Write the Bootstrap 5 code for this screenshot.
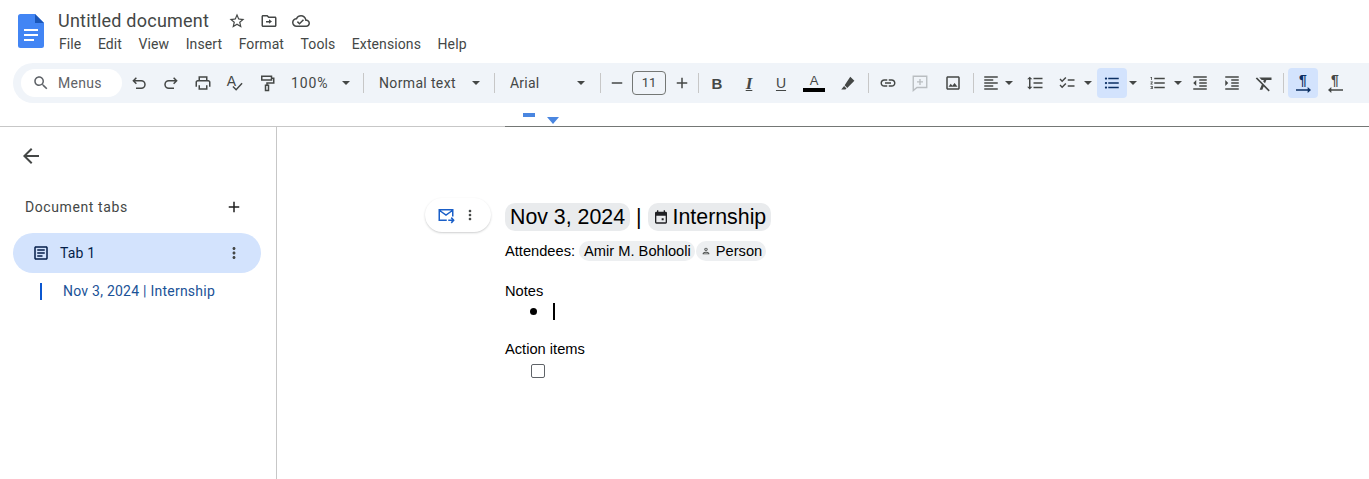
<!DOCTYPE html>
<html lang="en">
<head>
  <meta charset="UTF-8" />
  <title>Untitled document - Google Docs</title>
  <link href="https://cdn.jsdelivr.net/npm/bootstrap@5.3.0/dist/css/bootstrap.min.css" rel="stylesheet" />
  <style>
    body { font-family: Roboto, "Open Sans", sans-serif; color: #444746; overflow: hidden; background: #fff; }
    svg { fill: currentColor; display: block; flex: none; }

    .top-head { height: 63px; padding-left: 18px; }
    .doc-logo { width: 26px; height: 34px; margin-top: 14px; margin-right: 14px; }
    .doc-title { font-size: 18px; line-height: 24px; letter-spacing: .23px; padding-top: 9px; width: 170px; }
    .head-icon { width: 18px; height: 18px; margin-right: 14px; }
    .head-icons { padding-top: 12px; }
    .menu-row { margin-top: 1px; margin-left: 1px; font-size: 14px; line-height: 20px; letter-spacing: .1px; gap: 16.5px; }

    .tool-bar { height: 40px; margin-left: 13px; padding-left: 8px; background: #f0f4f9; border-radius: 20px 0 0 20px; font-size: 14px; white-space: nowrap; }
    .find-pill { width: 101px; height: 28px; background: #fff; border-radius: 14px; padding-left: 11px; gap: 8px; font-size: 14px; letter-spacing: .3px; color: #5f6368; margin-right: 1px; }
    .tb { width: 32px; height: 30px; flex: none; }
    .tb svg { width: 18px; height: 18px; }
    .tb .clear-ic { width: 21px; height: 21px; }
    .tb-narrow { width: 31px; }
    .tb-wide { width: 30px; border-radius: 4px; }
    .tb-align { width: 28px; }
    .tb-on { background: #d3e3fd; color: #0b2f63; }
    .tb-off { color: #b9bdc1; }
    .caret-ic { width: 8px !important; height: 4px !important; flex: none; }
    .sel { height: 30px; flex: none; padding: 0 7px 0 8px; justify-content: space-between; }
    .sel-zoom { width: 72px; padding-right: 5px; letter-spacing: .9px; }
    .sel-style { width: 115px; padding-left: 7px; letter-spacing: .35px; }
    .sel-font { width: 90px; letter-spacing: .2px; }
    .sep { width: 1px; height: 20px; background: #c7c7c7; flex: none; }
    .sep-a { margin: 0 8px; }
    .sep-b { margin: 0 7px; }
    .sep-d { margin: 0 2px 0 1px; }
    .sep-e { margin: 0 3px 0 4px; }
    .sep-f { margin: 0 4px 0 3px; }
    .gap-r1 { margin-right: 1px; }
    .gap-r2 { margin-right: 2px; }
    .gap-r5 { margin-right: 5px; }
    .gap-r6 { margin-right: 6px; }
    .size-box { width: 34px; height: 24px; border: 1px solid #747775; border-radius: 4px; flex: none; font-size: 13px; color: #444746; }
    .fmt { font-family: "Liberation Sans", sans-serif; font-size: 15px; line-height: 1; color: #444746; }
    .fmt-i { font-family: "Liberation Serif", serif; font-size: 17px; text-decoration: underline; text-underline-offset: 1px; }
    .fmt-u { text-decoration: underline; text-underline-offset: 2px; font-size: 14px; }
    .fmt-a { font-size: 13px; }
    .color-bar { width: 22px; height: 4px; background: #000; margin-top: 1px; }
    .spell-a { font-size: 14px; line-height: 14px; margin-right: -4px; margin-top: -5px; }
    .spell-check { width: 11px !important; height: 11px !important; margin-top: 7px; }
    .para { font-family: "Liberation Sans", sans-serif; font-weight: 700; font-size: 14px; line-height: 12px; }
    .para-arrow { width: 15px !important; height: 6px !important; margin-top: 1px; }

    .ruler-strip { height: 24px; border-bottom: 1px solid #c7c7c7; }
    .ruler-line { position: absolute; left: 505px; right: 0; bottom: -1px; height: 1px; background: #747775; }
    .ruler-bar { position: absolute; left: 523px; top: 10px; width: 12px; height: 4px; background: #4a86e0; }
    .ruler-tri { position: absolute; left: 547px; top: 14px; width: 12px; height: 7px; fill: #4a86e0; }

    .side-pane { width: 277px; flex: none; border-right: 1px solid #c7c7c7; padding: 17px 15px 0 13px; }
    .back-ic { width: 24px; height: 24px; margin-left: 6px; }
    .tabs-head { margin-top: 27px; margin-left: 12px; height: 24px; font-size: 14px; letter-spacing: .6px; margin-right: 18px; }
    .tabs-head svg { width: 18px; height: 18px; color: #1f1f1f; }
    .tab-pill { margin-top: 14px; height: 40px; background: #d3e3fd; border-radius: 20px; padding: 0 18px 0 19px; color: #041e49; font-size: 14px; letter-spacing: .2px; }
    .tab-pill .art-ic { width: 18px; height: 18px; margin-right: 10px; }
    .tab-pill .dot-ic { width: 18px; height: 18px; color: #444746; }
    .tab-sub { margin-top: 9px; margin-left: 27px; height: 18px; font-size: 14px; color: #1a5297; letter-spacing: .24px; line-height: 18px; }
    .tab-sub-bar { width: 2px; height: 17px; background: #0b57d0; margin-right: 21px; }

    .doc-area { padding: 71px 0 0 148px; gap: 14px; font-family: "Liberation Sans", sans-serif; color: #000; }
    .mail-pill { width: 66px; height: 34px; background: #fff; border-radius: 17px; box-shadow: 0 1px 2px rgba(60,64,67,.25); padding-left: 12px; gap: 7px; flex: none; }
    .mail-pill svg { width: 18px; height: 18px; color: #1a5fc8; }
    .mail-pill .dot-ic { width: 16px; height: 16px; color: #444746; }
    .doc-body { font-size: 14.67px; line-height: 20px; }
    .doc-head { font-size: 21.33px; line-height: 28px; height: 28px; margin-top: 5px; }
    .chip { background: #e9ebed; border-radius: 10px; padding: 0 5px; }
    .chip-cal svg { width: 16px; height: 16px; margin-right: 4px; color: #202124; }
    .sep-bar { margin: 0 6px 0 6px; }
    .attend-row { margin-top: 10px; height: 20px; }
    .chip-sm { background: #edeff1; border-radius: 10px; padding: 0 4px 0 5px; margin-left: 4px; }
    .chip-person { margin-left: 1px; padding-left: 5px; padding-right: 4px; }
    .chip-person svg { width: 10px; height: 10px; margin-right: 5px; color: #444746; }
    .notes-line { margin-top: 20px; }
    .bullet-row { height: 20px; margin-left: 25px; }
    .bullet-dot { width: 7px; height: 7px; background: #000; border-radius: 50%; margin-right: 16px; }
    .text-cursor { width: 2px; height: 17px; background: #000; }
    .action-line { margin-top: 18px; }
    .todo-box { width: 14px; height: 14px; border: 1.5px solid #5f6368; border-radius: 2px; margin: 5px 0 0 26px; }
  </style>
</head>
<body class="d-flex flex-column vh-100">

  <svg width="0" height="0" class="position-absolute">
    <defs>
      <symbol id="i-star" viewBox="0 0 24 24"><path d="M22 9.24l-7.19-.62L12 2 9.19 8.63 2 9.24l5.46 4.73L5.82 21 12 17.27 18.18 21l-1.63-7.03L22 9.24zM12 15.4l-3.76 2.27 1-4.28-3.32-2.88 4.38-.38L12 6.1l1.71 4.04 4.38.38-3.32 2.88 1 4.28L12 15.4z"/></symbol>
      <symbol id="i-move" viewBox="0 0 24 24"><path d="M20 6h-8l-2-2H4c-1.1 0-2 .9-2 2v12c0 1.1.9 2 2 2h16c1.1 0 2-.9 2-2V8c0-1.1-.9-2-2-2zm0 12H4V6h5.17l2 2H20v10zm-8-2.5V14H8v-2h4V9.5l4 3z"/></symbol>
      <symbol id="i-cloud" viewBox="0 0 24 24"><path d="M19.35 10.04C18.67 6.59 15.64 4 12 4 9.11 4 6.6 5.64 5.35 8.04 2.34 8.36 0 10.91 0 14c0 3.31 2.69 6 6 6h13c2.76 0 5-2.24 5-5 0-2.64-2.05-4.78-4.65-4.96zM19 18H6c-2.21 0-4-1.79-4-4 0-2.05 1.53-3.76 3.56-3.97l1.07-.11.5-.95C8.08 7.14 9.94 6 12 6c2.62 0 4.88 1.86 5.39 4.43l.3 1.5 1.53.11c1.56.1 2.78 1.41 2.78 2.96 0 1.65-1.35 3-3 3zm-9-1l6.01-6.01-1.41-1.41L10 14.17l-2.09-2.09L6.5 13.5z"/></symbol>
      <symbol id="i-search" viewBox="0 0 24 24"><path d="M15.5 14h-.79l-.28-.27C15.41 12.59 16 11.11 16 9.5 16 5.91 13.09 3 9.5 3S3 5.91 3 9.5 5.91 16 9.5 16c1.61 0 3.09-.59 4.23-1.57l.27.28v.79l5 4.99L20.49 19l-4.99-5zm-6 0C7.01 14 5 11.99 5 9.5S7.01 5 9.5 5 14 7.01 14 9.5 11.99 14 9.5 14z"/></symbol>
      <symbol id="i-undo" viewBox="0 0 24 24"><path d="M8.5 5L4.5 9l4 4M4.5 9H15a5 5 0 0 1 0 10H8" fill="none" stroke="currentColor" stroke-width="2"/></symbol>
      <symbol id="i-redo" viewBox="0 0 24 24"><path d="M15.5 5l4 4-4 4M19.5 9H9a5 5 0 0 0 0 10h7" fill="none" stroke="currentColor" stroke-width="2"/></symbol>
      <symbol id="i-print" viewBox="0 0 24 24"><path d="M19 8h-1V3H6v5H5c-1.66 0-3 1.34-3 3v6h4v4h12v-4h4v-6c0-1.66-1.34-3-3-3zM8 5h8v3H8V5zm8 14H8v-4h8v4zm2-2v-2H6v2H4v-6c0-.55.45-1 1-1h14c.55 0 1 .45 1 1v6h-2z"/></symbol>
      <symbol id="i-check" viewBox="0 0 12 12"><path d="M1 6l3.5 3.5L11 2.5" fill="none" stroke="currentColor" stroke-width="1.6"/></symbol>
      <symbol id="i-paint" viewBox="0 0 24 24"><path d="M5 3h13v5H5zM18 5.5h3V12h-9v2.5M10 15h4v7h-4z" fill="none" stroke="currentColor" stroke-width="2"/></symbol>
      <symbol id="i-caret" viewBox="0 0 8 4"><path d="M0 0h8L4 4z"/></symbol>
      <symbol id="i-minus" viewBox="0 0 24 24"><path d="M19 13H5v-2h14z"/></symbol>
      <symbol id="i-plus" viewBox="0 0 24 24"><path d="M19 13h-6v6h-2v-6H5v-2h6V5h2v6h6v2z"/></symbol>
      <symbol id="i-ink" viewBox="0 0 24 24"><path d="M15 3.500l5.500 5.500-9.500 9.500L7.500 15zM6.800 16l3.200 3.200-1.500 1.500H3z"/></symbol>
      <symbol id="i-link" viewBox="0 0 24 24"><path d="M3.9 12c0-1.71 1.39-3.1 3.1-3.1h4V7H7c-2.76 0-5 2.24-5 5s2.24 5 5 5h4v-1.9H7c-1.71 0-3.1-1.39-3.1-3.1zM8 13h8v-2H8v2zm9-6h-4v1.9h4c1.71 0 3.1 1.39 3.1 3.1s-1.39 3.1-3.1 3.1h-4V17h4c2.76 0 5-2.24 5-5s-2.24-5-5-5z"/></symbol>
      <symbol id="i-comment" viewBox="0 0 24 24"><path d="M3 3h18v15H8l-5 4zM12 6.500v8M8 10.500h8" fill="none" stroke="currentColor" stroke-width="1.8"/></symbol>
      <symbol id="i-image" viewBox="0 0 24 24"><path d="M19 5v14H5V5h14m0-2H5c-1.1 0-2 .9-2 2v14c0 1.1.9 2 2 2h14c1.1 0 2-.9 2-2V5c0-1.1-.9-2-2-2zm-4.860 8.860l-3 3.870L9 13.140 6 17h12l-3.860-5.140z"/></symbol>
      <symbol id="i-align" viewBox="0 0 24 24"><path d="M15 15H3v2h12v-2zm0-8H3v2h12V7zM3 13h18v-2H3v2zm0 8h18v-2H3v2zM3 3v2h18V3H3z"/></symbol>
      <symbol id="i-spacing" viewBox="0 0 24 24"><path d="M6 7h2.500L5 3.500 1.500 7H4v10H1.500L5 20.500 8.500 17H6V7zm4-2v2h12V5H10zm0 14h12v-2H10v2zm0-6h12v-2H10v2z"/></symbol>
      <symbol id="i-todo" viewBox="0 0 24 24"><path d="M22 7h-9v2h9V7zm0 8h-9v2h9v-2zM5.540 11L2 7.460l1.410-1.410 2.120 2.120 4.240-4.240 1.410 1.410L5.540 11zm0 8L2 15.460l1.410-1.410 2.120 2.120 4.240-4.240 1.410 1.410L5.540 19z"/></symbol>
      <symbol id="i-bullets" viewBox="0 0 24 24"><path d="M4 10.500c-.83 0-1.500.67-1.500 1.500s.67 1.500 1.500 1.500 1.500-.67 1.500-1.500-.67-1.500-1.500-1.500zm0-6c-.83 0-1.500.67-1.500 1.500S3.170 7.500 4 7.500 5.500 6.830 5.500 6 4.830 4.500 4 4.500zm0 12c-.83 0-1.500.68-1.500 1.500s.68 1.500 1.500 1.500 1.500-.68 1.500-1.500-.67-1.500-1.500-1.500zM7 19h14v-2H7v2zm0-6h14v-2H7v2zm0-8v2h14V5H7z"/></symbol>
      <symbol id="i-numbers" viewBox="0 0 24 24"><path d="M2 17h2v.5H3v1h1v.5H2v1h3v-4H2v1zm1-9h1V4H2v1h1v3zm-1 3h1.800L2 13.100v.9h3v-1H3.200L5 10.900V10H2v1zm5-6v2h14V5H7zm0 14h14v-2H7v2zm0-6h14v-2H7v2z"/></symbol>
      <symbol id="i-outdent" viewBox="0 0 24 24"><path d="M11 17h10v-2H11v2zm-8-5l4 4V8l-4 4zm0 9h18v-2H3v2zM3 3v2h18V3H3zm8 6h10V7H11v2zm0 4h10v-2H11v2z"/></symbol>
      <symbol id="i-indent" viewBox="0 0 24 24"><path d="M3 21h18v-2H3v2zM3 8v8l4-4-4-4zm8 9h10v-2H11v2zM3 3v2h18V3H3zm8 6h10V7H11v2zm0 4h10v-2H11v2z"/></symbol>
      <symbol id="i-clear" viewBox="0 0 24 24"><path d="M3.270 5L2 6.270l6.970 6.970L6.500 19h3l1.570-3.660L16.730 21 18 19.730 3.550 5.270 3.270 5zM6 5v.18L8.820 8h2.400l-.72 1.680 2.100 2.100L14.210 8H20V5H6z"/></symbol>
      <symbol id="i-arrow-r" viewBox="0 0 18 7"><path d="M0 2.700h14V0l4 3.500L14 7V4.300H0z"/></symbol>
      <symbol id="i-arrow-l" viewBox="0 0 18 7"><path d="M18 2.700H4V0L0 3.500 4 7V4.300h14z"/></symbol>
      <symbol id="i-back" viewBox="0 0 24 24"><path d="M20 11H7.830l5.590-5.590L12 4l-8 8 8 8 1.410-1.410L7.830 13H20v-2z"/></symbol>
      <symbol id="i-article" viewBox="0 0 24 24"><path d="M19 5v14H5V5h14m0-2H5c-1.100 0-2 .9-2 2v14c0 1.100.9 2 2 2h14c1.100 0 2-.9 2-2V5c0-1.100-.9-2-2-2zM14 17H7v-2h7v2zm3-4H7v-2h10v2zm0-4H7V7h10v2z"/></symbol>
      <symbol id="i-dots" viewBox="0 0 24 24"><path d="M12 8c1.100 0 2-.9 2-2s-.9-2-2-2-2 .9-2 2 .9 2 2 2zm0 2c-1.100 0-2 .9-2 2s.9 2 2 2 2-.9 2-2-.9-2-2-2zm0 6c-1.100 0-2 .9-2 2s.9 2 2 2 2-.9 2-2-.9-2-2-2z"/></symbol>
      <symbol id="i-mail" viewBox="0 0 24 24"><path d="M13 19H3V5h18v9M3.500 6l8.500 6 8.500-6M15 19h7M19 15.500l3.200 3.500-3.200 3.500" fill="none" stroke="currentColor" stroke-width="2"/></symbol>
      <symbol id="i-cal" viewBox="0 0 24 24"><path d="M19 4h-1V2h-2v2H8V2H6v2H5a2 2 0 0 0-2 2v14a2 2 0 0 0 2 2h14a2 2 0 0 0 2-2V6a2 2 0 0 0-2-2zm0 16H5V10h14zM13 14h3v3h-3z"/></symbol>
      <symbol id="i-person" viewBox="0 0 24 24"><path d="M12 12c2.200 0 4-1.800 4-4s-1.800-4-4-4-4 1.800-4 4 1.800 4 4 4zm0-6c1.100 0 2 .9 2 2s-.9 2-2 2-2-.9-2-2 .9-2 2-2zm0 8c-2.700 0-8 1.300-8 4v2h16v-2c0-2.700-5.300-4-8-4zm-6 4c.2-.7 3.300-2 6-2s5.800 1.300 6 2z"/></symbol>
    </defs>
  </svg>

  <header class="top-head d-flex flex-none">
    <svg class="doc-logo" viewBox="0 0 26 34">
      <path d="M2.500 0H17l9 9v22.500a2.500 2.500 0 0 1-2.500 2.500h-21A2.500 2.500 0 0 1 0 31.500v-29A2.500 2.500 0 0 1 2.500 0z" fill="#4285f4"/>
      <path d="M17 0l9 9h-9z" fill="#1a56b8"/>
      <path d="M6 15h14v2H6zM6 20h14v2H6zM6 25h10v2H6z" fill="#fff"/>
    </svg>
    <div>
      <div class="d-flex">
        <div class="doc-title">Untitled document</div>
        <div class="head-icons d-flex">
          <svg class="head-icon"><use href="#i-star"/></svg>
          <svg class="head-icon"><use href="#i-move"/></svg>
          <svg class="head-icon"><use href="#i-cloud"/></svg>
        </div>
      </div>
      <nav class="menu-row d-flex">
        <span>File</span><span>Edit</span><span>View</span><span>Insert</span><span>Format</span><span>Tools</span><span>Extensions</span><span>Help</span>
      </nav>
    </div>
  </header>

  <div class="tool-bar d-flex align-items-center flex-none">
    <div class="find-pill d-flex align-items-center flex-none">
      <svg width="18" height="18"><use href="#i-search"/></svg><span>Menus</span>
    </div>
    <div class="tb d-flex align-items-center justify-content-center"><svg><use href="#i-undo"/></svg></div>
    <div class="tb d-flex align-items-center justify-content-center"><svg><use href="#i-redo"/></svg></div>
    <div class="tb d-flex align-items-center justify-content-center"><svg><use href="#i-print"/></svg></div>
    <div class="tb d-flex align-items-center justify-content-center"><span class="fmt spell-a">A</span><svg class="spell-check"><use href="#i-check"/></svg></div>
    <div class="tb d-flex align-items-center justify-content-center"><svg><use href="#i-paint"/></svg></div>
    <div class="sel sel-zoom d-flex align-items-center"><span>100%</span><svg class="caret-ic"><use href="#i-caret"/></svg></div>
    <div class="sep sep-a"></div>
    <div class="sel sel-style d-flex align-items-center"><span>Normal text</span><svg class="caret-ic"><use href="#i-caret"/></svg></div>
    <div class="sep sep-b"></div>
    <div class="sel sel-font d-flex align-items-center"><span>Arial</span><svg class="caret-ic"><use href="#i-caret"/></svg></div>
    <div class="sep ms-2 me-0"></div>
    <div class="tb tb-narrow d-flex align-items-center justify-content-center"><svg><use href="#i-minus"/></svg></div>
    <div class="size-box d-flex align-items-center justify-content-center">11</div>
    <div class="tb tb-narrow d-flex align-items-center justify-content-center"><svg><use href="#i-plus"/></svg></div>
    <div class="sep sep-d"></div>
    <div class="tb d-flex align-items-center justify-content-center"><b class="fmt">B</b></div>
    <div class="tb d-flex align-items-center justify-content-center"><b class="fmt fmt-i"><i>I</i></b></div>
    <div class="tb gap-r1 d-flex align-items-center justify-content-center"><span class="fmt fmt-u">U</span></div>
    <div class="tb gap-r2 d-flex flex-column align-items-center justify-content-center"><span class="fmt fmt-a">A</span><div class="color-bar"></div></div>
    <div class="tb d-flex align-items-center justify-content-center"><svg><use href="#i-ink"/></svg></div>
    <div class="sep sep-e"></div>
    <div class="tb d-flex align-items-center justify-content-center"><svg><use href="#i-link"/></svg></div>
    <div class="tb gap-r1 tb-off d-flex align-items-center justify-content-center"><svg><use href="#i-comment"/></svg></div>
    <div class="tb d-flex align-items-center justify-content-center"><svg><use href="#i-image"/></svg></div>
    <div class="sep sep-e"></div>
    <div class="tb tb-align d-flex align-items-center justify-content-center"><svg><use href="#i-align"/></svg></div>
    <svg class="caret-ic gap-r6"><use href="#i-caret"/></svg>
    <div class="tb d-flex align-items-center justify-content-center"><svg><use href="#i-spacing"/></svg></div>
    <div class="tb gap-r1 d-flex align-items-center justify-content-center"><svg><use href="#i-todo"/></svg></div>
    <svg class="caret-ic gap-r5"><use href="#i-caret"/></svg>
    <div class="tb tb-wide tb-on gap-r2 d-flex align-items-center justify-content-center"><svg><use href="#i-bullets"/></svg></div>
    <svg class="caret-ic gap-r5"><use href="#i-caret"/></svg>
    <div class="tb d-flex align-items-center justify-content-center"><svg><use href="#i-numbers"/></svg></div>
    <svg class="caret-ic gap-r2"><use href="#i-caret"/></svg>
    <div class="tb d-flex align-items-center justify-content-center"><svg><use href="#i-outdent"/></svg></div>
    <div class="tb d-flex align-items-center justify-content-center"><svg><use href="#i-indent"/></svg></div>
    <div class="tb d-flex align-items-center justify-content-center"><svg class="clear-ic"><use href="#i-clear"/></svg></div>
    <div class="sep sep-f"></div>
    <div class="tb tb-wide tb-on gap-r1 d-flex flex-column align-items-center justify-content-center"><span class="para">¶</span><svg class="para-arrow"><use href="#i-arrow-r"/></svg></div>
    <div class="tb d-flex flex-column align-items-center justify-content-center"><span class="para">¶</span><svg class="para-arrow"><use href="#i-arrow-l"/></svg></div>
  </div>

  <div class="ruler-strip position-relative flex-none">
    <div class="ruler-line"></div>
    <div class="ruler-bar"></div>
    <svg class="ruler-tri" viewBox="0 0 12 7"><path d="M0 0h12L6 7z"/></svg>
  </div>

  <main class="d-flex flex-grow-1">
    <aside class="side-pane">
      <svg class="back-ic"><use href="#i-back"/></svg>
      <div class="tabs-head d-flex align-items-center justify-content-between">
        <span>Document tabs</span><svg><use href="#i-plus"/></svg>
      </div>
      <div class="tab-pill d-flex align-items-center">
        <svg class="art-ic"><use href="#i-article"/></svg>
        <span class="flex-grow-1">Tab 1</span>
        <svg class="dot-ic"><use href="#i-dots"/></svg>
      </div>
      <div class="tab-sub d-flex align-items-center">
        <div class="tab-sub-bar"></div><span>Nov 3, 2024 | Internship</span>
      </div>
    </aside>

    <section class="doc-area d-flex align-items-start">
      <div class="mail-pill d-flex align-items-center">
        <svg><use href="#i-mail"/></svg>
        <svg class="dot-ic"><use href="#i-dots"/></svg>
      </div>
      <div class="doc-body">
        <div class="doc-head d-flex align-items-center">
          <span class="chip">Nov 3, 2024</span>
          <span class="sep-bar">|</span>
          <span class="chip chip-cal d-flex align-items-center"><svg><use href="#i-cal"/></svg>Internship</span>
        </div>
        <div class="attend-row d-flex align-items-center">
          <span>Attendees:</span>
          <span class="chip-sm">Amir M. Bohlooli</span>
          <span class="chip-sm chip-person d-flex align-items-center"><svg><use href="#i-person"/></svg>Person</span>
        </div>
        <div class="notes-line">Notes</div>
        <div class="bullet-row d-flex align-items-center">
          <div class="bullet-dot"></div><div class="text-cursor"></div>
        </div>
        <div class="action-line">Action items</div>
        <div class="todo-box"></div>
      </div>
    </section>
  </main>

  <script src="https://cdn.jsdelivr.net/npm/bootstrap@5.3.0/dist/js/bootstrap.bundle.min.js"></script>
</body>
</html>
